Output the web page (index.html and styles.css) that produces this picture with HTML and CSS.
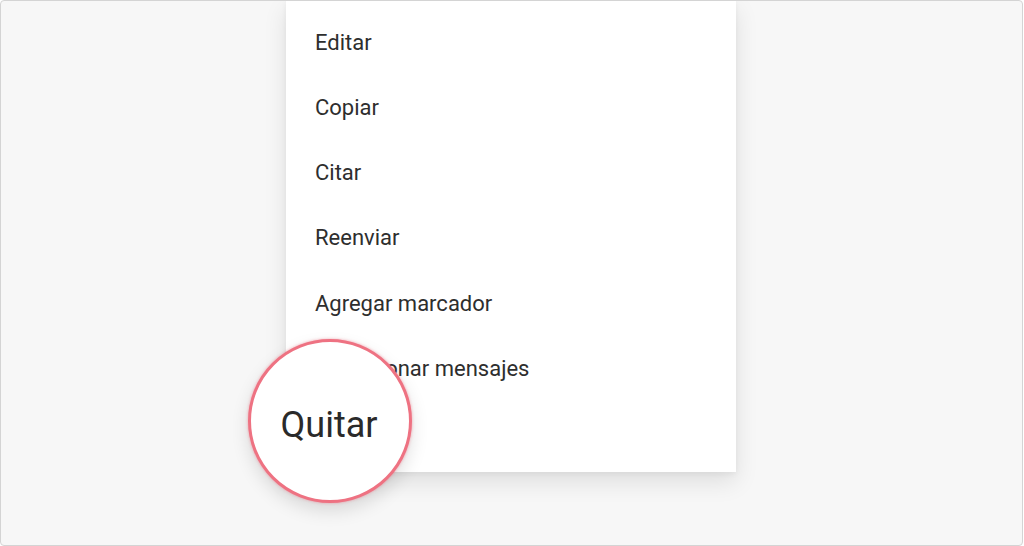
FILE: index.html
```html
<!DOCTYPE html>
<html lang="es">
<head>
<meta charset="utf-8">
<title>Menú</title>
<link rel="stylesheet" href="styles.css">
</head>
<body>
<div class="frame">
  <div class="menu">
    <div class="item">Editar</div>
    <div class="item">Copiar</div>
    <div class="item">Citar</div>
    <div class="item">Reenviar</div>
    <div class="item">Agregar marcador</div>
    <div class="item">Seleccionar mensajes</div>
    <div class="item">Quitar</div>
  </div>
  <div class="lens"><span class="lens-text">Quitar</span></div>
</div>
</body>
</html>
```
FILE: styles.css
```css
html, body {
  margin: 0;
  padding: 0;
  background: #ffffff;
}
body {
  font-family: Roboto, "Liberation Sans", Arial, sans-serif;
  color: #2e2e2e;
}
.frame {
  position: relative;
  box-sizing: border-box;
  width: 1023px;
  height: 546px;
  border: 1px solid #d4d4d4;
  border-radius: 4px;
  background: #f7f7f7;
  overflow: hidden;
  display: flex;
  align-items: flex-start;
  padding-left: 285px;
}
.menu {
  width: 450px;
  margin-top: -1px;
  padding: 10px 0 5px;
  background: #ffffff;
  box-shadow: 0 10px 22px rgba(0, 0, 0, 0.10), 0 2px 6px rgba(0, 0, 0, 0.05);
  display: flex;
  flex-direction: column;
}
.item {
  height: 65.25px;
  display: flex;
  align-items: center;
  padding-left: 29px;
  font-size: 22px;
  line-height: 1;
  color: #2e2e2e;
}
.lens {
  position: absolute;
  left: 247px;
  top: 338px;
  width: 158px;
  height: 158px;
  border: 3px solid #ee7282;
  border-radius: 50%;
  background: #ffffff;
  box-shadow: 0 0 3px rgba(238, 114, 130, 0.6), 0 8px 18px rgba(0, 0, 0, 0.12);
  display: flex;
  align-items: center;
  justify-content: center;
}
.lens-text {
  font-size: 36px;
  line-height: 1;
  color: #2a2a2a;
  margin-top: 7px;
  margin-left: -2px;
}
```
